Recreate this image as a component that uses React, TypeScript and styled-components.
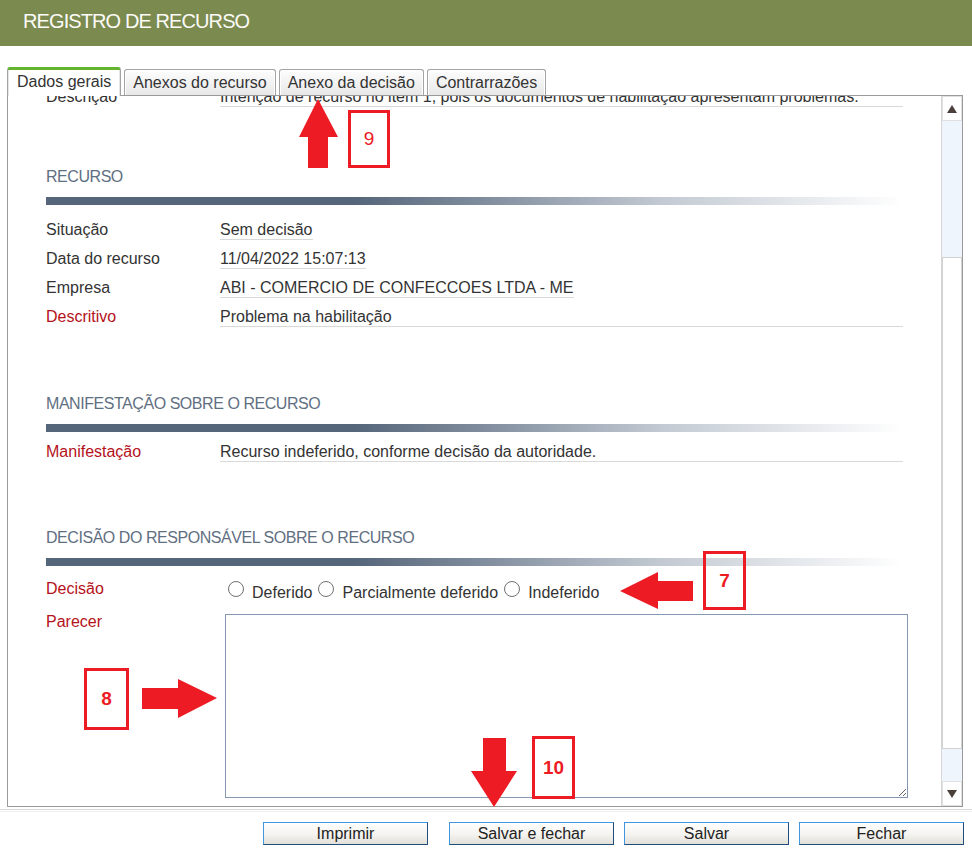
import React, { useLayoutEffect, useRef } from 'react'
import styled, { createGlobalStyle } from 'styled-components'

const GlobalStyle = createGlobalStyle`
  html, body {
    margin: 0;
    padding: 0;
    background: #fff;
  }
  body {
    font-family: "Liberation Sans", Arial, sans-serif;
    color: #333;
  }
  * {
    box-sizing: border-box;
  }
`

type Field = { label: string; value: string; required?: boolean; full?: boolean }

const intencao: Field[] = [
    { label: 'Data da intenção', value: '08/04/2022 10:21:37' },
    { label: 'Empresa', value: 'ABI - COMERCIO DE CONFECCOES LTDA - ME' },
    { label: 'Descrição', value: 'Intenção de recurso no item 1, pois os documentos de habilitação apresentam problemas.', full: true },
]

const recurso: Field[] = [
    { label: 'Situação', value: 'Sem decisão' },
    { label: 'Data do recurso', value: '11/04/2022 15:07:13' },
    { label: 'Empresa', value: 'ABI - COMERCIO DE CONFECCOES LTDA - ME' },
    { label: 'Descritivo', value: 'Problema na habilitação', required: true, full: true },
]

const tabs = ['Dados gerais', 'Anexos do recurso', 'Anexo da decisão', 'Contrarrazões']
const opcoes = ['Deferido', 'Parcialmente deferido', 'Indeferido']
const botoes = ['Imprimir', 'Salvar e fechar', 'Salvar', 'Fechar']

function FieldRows({ fields, top }: { fields: Field[]; top: number }) {
    return (
        <Rows $top={top}>
            {fields.map(f => (
                <Row key={f.label}>
                    <Label $required={f.required}>{f.label}</Label>
                    <Value $full={f.full}>{f.value}</Value>
                </Row>
            ))}
        </Rows>
    )
}

export default function App() {
    const areaRef = useRef<HTMLDivElement>(null)
    const recursoRef = useRef<HTMLDivElement>(null)

    // the form is shown scrolled so that the RECURSO block sits near the top
    useLayoutEffect(() => {
        if (areaRef.current && recursoRef.current) {
            areaRef.current.scrollTop = recursoRef.current.offsetTop - 71
        }
    }, [])

    return (
        <Page>
            <GlobalStyle />
            <Header>
                <Title>REGISTRO DE RECURSO</Title>
            </Header>

            <TabStrip>
                {tabs.map((t, i) => (
                    <Tab key={t} $active={i === 0}>{t}</Tab>
                ))}
            </TabStrip>

            <Panel>
                <ScrollArea ref={areaRef}>
                    <Section $gap={20}>
                        <SectionTitle>INTENÇÃO DE RECURSO</SectionTitle>
                        <Bar />
                        <FieldRows fields={intencao} top={15} />
                    </Section>

                    <Section ref={recursoRef} $gap={60}>
                        <SectionTitle>RECURSO</SectionTitle>
                        <Bar />
                        <FieldRows fields={recurso} top={15} />
                    </Section>

                    <Section $gap={67}>
                        <SectionTitle>MANIFESTAÇÃO SOBRE O RECURSO</SectionTitle>
                        <Bar />
                        <FieldRows
                            fields={[{ label: 'Manifestação', value: 'Recurso indeferido, conforme decisão da autoridade.', required: true, full: true }]}
                            top={10}
                        />
                    </Section>

                    <Section $gap={66}>
                        <SectionTitle>DECISÃO DO RESPONSÁVEL SOBRE O RECURSO</SectionTitle>
                        <Bar />
                        <Rows $top={13}>
                            <Row>
                                <Label $required>Decisão</Label>
                                <RadioGroup>
                                    {opcoes.map(o => (
                                        <RadioOption key={o}>
                                            <Radio type="radio" name="decisao" />
                                            {o}
                                        </RadioOption>
                                    ))}
                                </RadioGroup>
                            </Row>
                            <Row>
                                <Label $required>Parecer</Label>
                                <Parecer />
                            </Row>
                        </Rows>
                    </Section>
                </ScrollArea>

                <ScrollBar>
                    <ScrollButton><Arrow $dir="up" /></ScrollButton>
                    <Track>
                        <TrackPart $grow={136} />
                        <Thumb $grow={490} />
                        <TrackPart $grow={32} />
                    </Track>
                    <ScrollButton><Arrow $dir="down" /></ScrollButton>
                </ScrollBar>
            </Panel>

            <FooterLine />
            <Buttons>
                {botoes.map(b => (
                    <Button key={b}>{b}</Button>
                ))}
            </Buttons>

            {/* anotações em vermelho sobre a captura */}
            <Overlay width="972" height="863" viewBox="0 0 972 863">
                <polygon points="318,99 338,137 328,137 328,168 308,168 308,137 299,137" />
                <polygon points="620,591 658,572 658,581 693,581 693,601 658,601 658,609" />
                <polygon points="217,698 178,679 178,688 142,688 142,709 178,709 178,718" />
                <polygon points="494,807 517,771 506,771 506,738 483,738 483,771 471,771" />
            </Overlay>
            <Callout $x={348} $y={110} $w={42} $h={58}>9</Callout>
            <Callout $x={703} $y={551} $w={43} $h={59} $bold>7</Callout>
            <Callout $x={84} $y={668} $w={45} $h={62} $bold>8</Callout>
            <Callout $x={532} $y={736} $w={43} $h={63} $bold>10</Callout>
        </Page>
    )
}

const Page = styled.div`
    position: relative;
    width: 972px;
    height: 863px;
    overflow: hidden;
    background: #fff;
`

const Header = styled.div`
    height: 46px;
    background: #7b8a4e;
    display: flex;
    align-items: center;
    padding: 0 0 3px 23px;
`

const Title = styled.h1`
    margin: 0;
    font-size: 20px;
    font-weight: normal;
    letter-spacing: -0.9px;
    color: #fbfbf8;
`

const TabStrip = styled.div`
    position: relative;
    z-index: 2;
    display: flex;
    align-items: flex-end;
    gap: 3px;
    padding: 21px 0 0 7px;
`

const Tab = styled.div<{ $active?: boolean }>`
    height: ${p => (p.$active ? 29 : 26)}px;
    margin-bottom: ${p => (p.$active ? 0 : 1)}px;
    padding: 0 ${p => (p.$active ? 9 : 8)}px ${p => (p.$active ? 2 : 0)}px;
    display: flex;
    align-items: center;
    border: 1px solid #a3a3a3;
    border-bottom: none;
    border-top: ${p => (p.$active ? '3px solid #63b530' : '1px solid #a3a3a3')};
    border-radius: 3px 3px 0 0;
    background: ${p => (p.$active ? '#fff' : 'linear-gradient(#fdfdfd, #e8e8e8)')};
    box-shadow: ${p => (p.$active ? 'inset 1px 0 0 #e6e6e6, inset -1px 0 0 #e6e6e6' : 'inset 1px 1px 0 #fff, inset -1px 0 0 #fff')};
    font-size: 16px;
    color: #333;
    white-space: nowrap;
`

const Panel = styled.div`
    margin: -1px 9px 0 7px;
    height: 712px;
    border: 1px solid #9a9a9a;
    display: flex;
`

const ScrollArea = styled.div`
    position: relative;
    flex: 1;
    overflow: hidden;
    padding: 0 38px 60px;
`

const Section = styled.div<{ $gap: number }>`
    margin-top: ${p => p.$gap}px;
`

const SectionTitle = styled.div`
    font-size: 16px;
    line-height: 19px;
    letter-spacing: -0.45px;
    color: #5f6f82;
`

const Bar = styled.div`
    height: 8px;
    margin-top: 11px;
    background: linear-gradient(to right, #56667a 0%, #56667a 36%, #7d8a9b 50%, #c3cad3 72%, #fff 100%);
`

const Rows = styled.div<{ $top: number }>`
    display: grid;
    row-gap: 9px;
    margin-top: ${p => p.$top}px;
`

const Row = styled.div`
    display: grid;
    grid-template-columns: 174px 1fr;
    align-items: start;
`

const Label = styled.div<{ $required?: boolean }>`
    font-size: 16px;
    line-height: 19px;
    color: ${p => (p.$required ? '#b5121b' : '#333')};
    white-space: nowrap;
`

const Value = styled.div<{ $full?: boolean }>`
    justify-self: ${p => (p.$full ? 'stretch' : 'start')};
    font-size: 16px;
    line-height: 19px;
    color: #333;
    border-bottom: 1px solid #d9d9d9;
    white-space: nowrap;
    overflow: hidden;
`

const RadioGroup = styled.div`
    display: flex;
    gap: 6px;
    padding: 4px 0 1px 8px;
`

const RadioOption = styled.label`
    display: flex;
    align-items: flex-start;
    gap: 8px;
    font-size: 16px;
    line-height: 19px;
    color: #333;
    white-space: nowrap;
`

const Radio = styled.input`
    appearance: none;
    width: 16px;
    height: 16px;
    margin: -2px 0 0;
    flex-shrink: 0;
    border: 1px solid #707070;
    border-radius: 50%;
    background: #fff;
`

const Parecer = styled.textarea`
    width: 683px;
    height: 184px;
    margin: 2px 0 0 5px;
    border: 1px solid #8499b1;
    font-family: "Liberation Sans", Arial, sans-serif;
    font-size: 16px;
    outline: none;
`

const ScrollBar = styled.div`
    width: 21px;
    display: flex;
    flex-direction: column;
    border-left: 1px solid #d6d6d6;
    background: #fff;
`

const ScrollButton = styled.div`
    height: 25px;
    display: flex;
    align-items: center;
    justify-content: center;
    background: #fff;
    border: 1px solid #e0e0e0;
`

const Arrow = styled.span<{ $dir: 'up' | 'down' }>`
    width: 0;
    height: 0;
    border-left: 5px solid transparent;
    border-right: 5px solid transparent;
    ${p => (p.$dir === 'up' ? 'border-bottom' : 'border-top')}: 8px solid #4a3f3a;
`

const Track = styled.div`
    flex: 1;
    display: flex;
    flex-direction: column;
    background: #eef5fd;
`

const TrackPart = styled.div<{ $grow: number }>`
    flex: ${p => p.$grow} 1 0;
`

const Thumb = styled.div<{ $grow: number }>`
    flex: ${p => p.$grow} 1 0;
    background: #fff;
    border: 1px solid #d2d2d2;
`

const FooterLine = styled.div`
    margin-top: 2px;
    height: 3px;
    border-top: 1px solid #d8d8d8;
    border-bottom: 1px solid #eeeeee;
`

const Buttons = styled.div`
    display: flex;
    justify-content: flex-end;
    gap: 10px;
    padding: 10px 8px 0 0;

    & > :first-child {
        margin-right: 11px;
    }
`

const Button = styled.button`
    width: 165px;
    height: 23px;
    padding: 0;
    border: 1px solid;
    border-color: #4196e0 #1f4d7e #1f4d7e #4196e0;
    background: linear-gradient(#ffffff 0%, #f4f3ef 55%, #e2e0d9 100%);
    font-family: "Liberation Sans", Arial, sans-serif;
    font-size: 16px;
    color: #222;
`

const Overlay = styled.svg`
    position: absolute;
    left: 0;
    top: 0;
    pointer-events: none;
    fill: #ed1c24;
`

const Callout = styled.div<{ $x: number; $y: number; $w: number; $h: number; $bold?: boolean }>`
    position: absolute;
    left: ${p => p.$x}px;
    top: ${p => p.$y}px;
    width: ${p => p.$w}px;
    height: ${p => p.$h}px;
    border: 3px solid #ed1c24;
    display: flex;
    align-items: center;
    justify-content: center;
    color: #ed1c24;
    font-family: "Liberation Sans", Arial, sans-serif;
    font-size: 19px;
    font-weight: ${p => (p.$bold ? 'bold' : 'normal')};
`
